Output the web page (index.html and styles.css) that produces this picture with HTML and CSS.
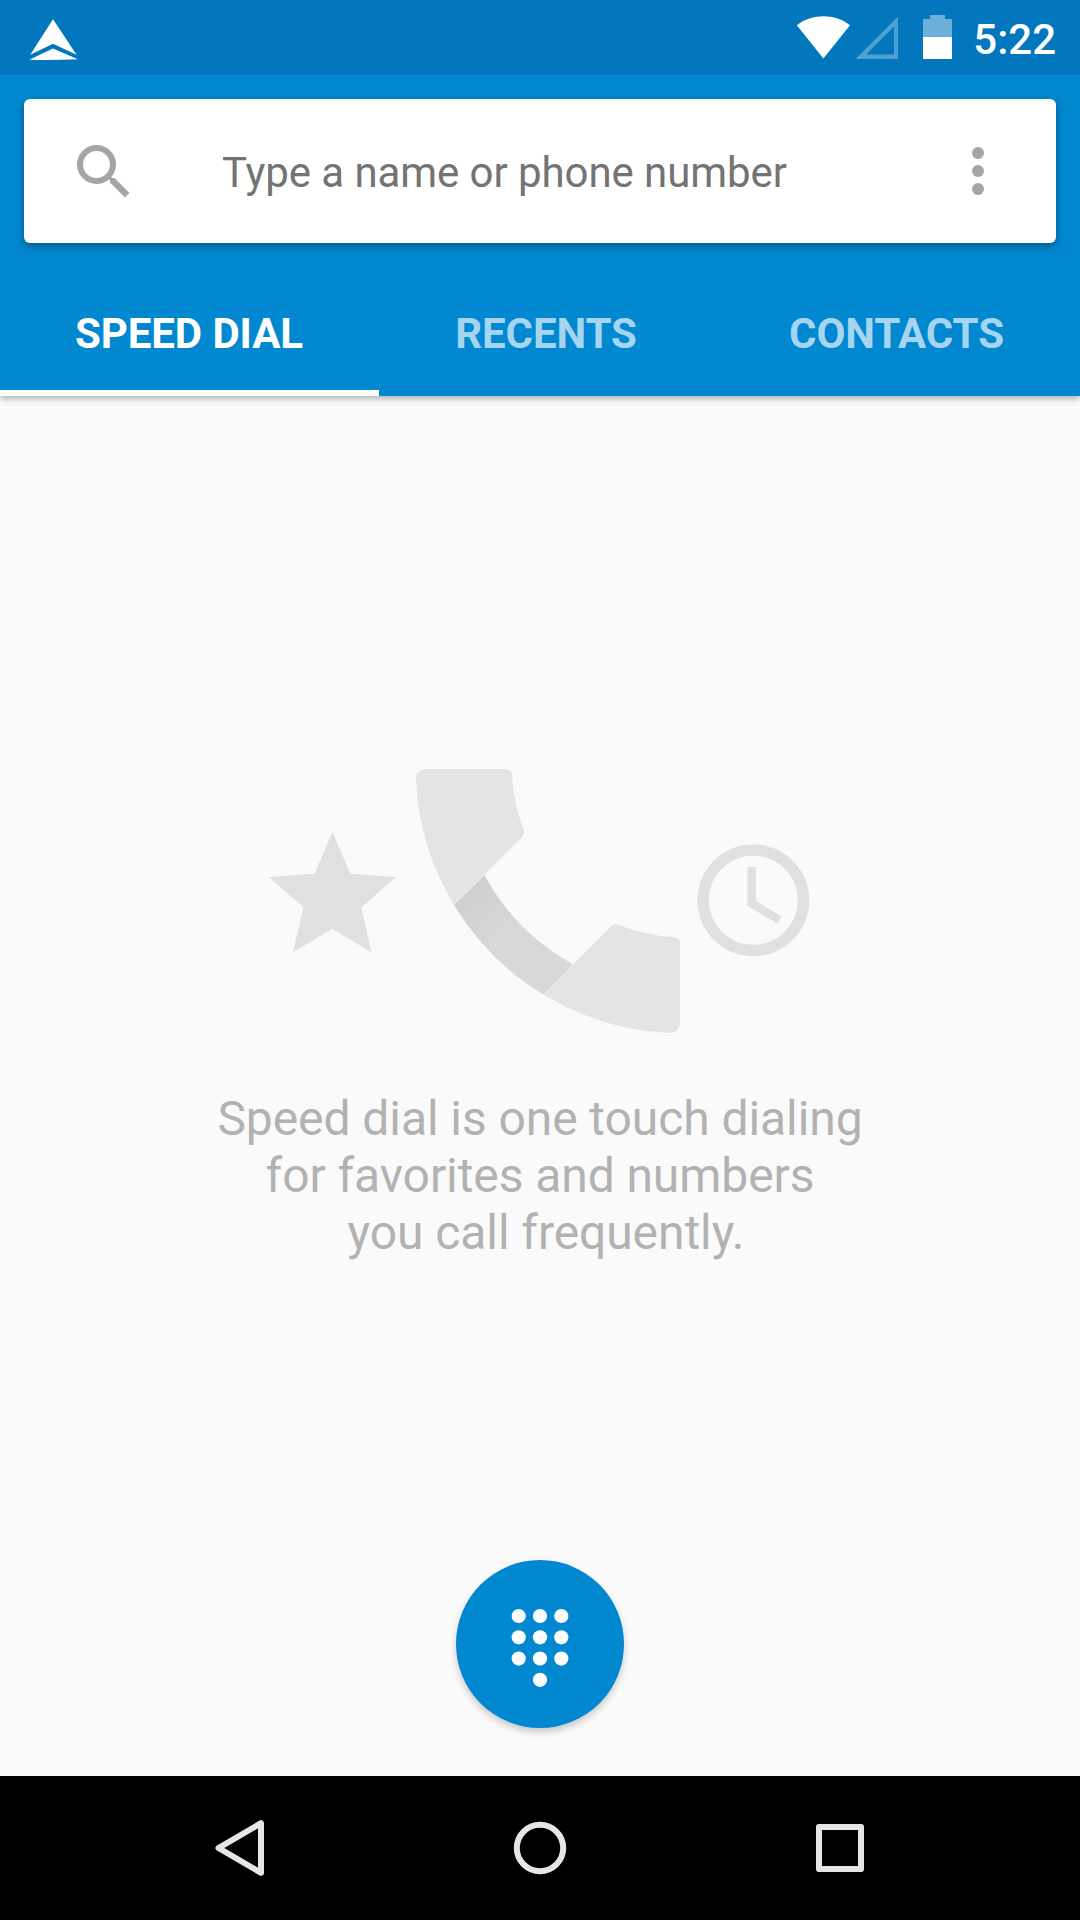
FILE: index.html
```html
<!DOCTYPE html>
<html lang="en">
<head>
<meta charset="utf-8">
<title>Phone</title>
<link rel="stylesheet" href="styles.css">
</head>
<body>
<div class="screen">
  <header class="header">
    <div class="status">
      <svg class="status-logo" width="54" height="75" viewBox="27.3 0 54 75" fill="#fff"><path d="M53.3 19.3 76.8 54.8 53.3 43.7 30.6 54.8zM53.3 48.4 78.2 59.2Q53.3 60.4 29.6 59.8z"/></svg>
      <svg width="54" height="75" viewBox="796 0 54 75" fill="#fff"><path d="M796.8 25.3C812 13.2 835 13.2 850 25.3L823.4 58.6z"/></svg>
      <svg class="signal" width="43" height="75" viewBox="855 0 43 75"><path fill="#fff" fill-opacity=".3" fill-rule="evenodd" d="M855.5 59 898 16.5V59zM866 54.6H894V26.6z"/></svg>
      <svg class="battery" width="29" height="75" viewBox="0 0 29 75"><path fill="#fff" fill-opacity=".42" d="M0 19H7V15H22V19H29V37H0z"/><path fill="#fff" d="M0 37H29V59H0z"/></svg>
      <span class="clock">5:22</span>
    </div>
    <div class="search">
      <svg class="search-icon" width="72" height="72" viewBox="0 0 24 24" fill="#a5a5a5"><path d="M15.5 14h-.79l-.28-.27A6.47 6.47 0 0 0 16 9.5 6.5 6.5 0 1 0 9.5 16c1.61 0 3.09-.59 4.23-1.57l.27.28v.79l5 4.99L20.49 19l-4.99-5zm-6 0a4.5 4.5 0 1 1 0-9 4.5 4.5 0 0 1 0 9z"/></svg>
      <span class="search-hint">Type a name or phone number</span>
      <svg width="72" height="72" viewBox="0 0 24 24" fill="#a5a5a5"><circle cx="12" cy="6" r="2"/><circle cx="12" cy="12" r="2"/><circle cx="12" cy="18" r="2"/></svg>
    </div>
    <nav class="tabs">
      <span class="tab tab-active">SPEED DIAL</span>
      <span class="tab">RECENTS</span>
      <span class="tab">CONTACTS</span>
    </nav>
  </header>
  <main class="content">
    <svg class="art" width="560" height="280" viewBox="260 760 560 280">
      <defs><linearGradient id="handle" gradientUnits="userSpaceOnUse" x1="469" y1="885" x2="510" y2="935"><stop offset="0" stop-color="#cfcfcf"/><stop offset="1" stop-color="#d8d8d8"/></linearGradient></defs>
      <path fill="#e0e0e0" d="M332.5 832 350.1 873.8 395.6 877 361.4 907.5 371.4 952.3 332.5 928.7 293 952.3 303.4 907.5 269 877 314.6 873.8z"/>
      <path fill="url(#handle)" d="M454 905A264 264 0 0 0 543.5 994.5L572.8 964.2A222.6 222.6 0 0 1 484.5 875z"/>
      <path fill="#e4e4e4" d="M454 905A264 264 0 0 1 416 780Q416 769 427 769H505Q512 769 512 776A168 168 0 0 0 523.6 829Q525 833.5 522.5 836.5z"/>
      <path fill="#e4e4e4" d="M543.5 994.5A264 264 0 0 0 669 1033Q680 1033 680 1021V944Q680 937 673 937A168 168 0 0 1 619 925Q614 923 611 926z"/>
      <circle cx="753.3" cy="900.3" r="50.2" fill="none" stroke="#e0e0e0" stroke-width="11.4"/>
      <path d="M751.7 867V903.3L779.6 920.2" fill="none" stroke="#e0e0e0" stroke-width="8.4"/>
    </svg>
    <p class="message">Speed dial is one touch dialing
for favorites and numbers
 you call frequently.</p>
    <div class="fab">
      <svg width="72" height="72" viewBox="0 0 72 72" fill="#fff"><circle cx="14.7" cy="8" r="7.1"/><circle cx="36" cy="8" r="7.1"/><circle cx="57.3" cy="8" r="7.1"/><circle cx="14.7" cy="29.3" r="7.1"/><circle cx="36" cy="29.3" r="7.1"/><circle cx="57.3" cy="29.3" r="7.1"/><circle cx="14.7" cy="50.6" r="7.1"/><circle cx="36" cy="50.6" r="7.1"/><circle cx="57.3" cy="50.6" r="7.1"/><circle cx="36" cy="71.8" r="7.1"/></svg>
    </div>
  </main>
  <footer class="navbar">
    <svg width="72" height="72" viewBox="0 0 72 72"><path d="M14.5 36 57 11.2V60.8z"/></svg>
    <svg width="72" height="72" viewBox="0 0 72 72"><circle cx="36" cy="36" r="23.2"/></svg>
    <svg width="72" height="72" viewBox="0 0 72 72"><path d="M15 15H57V57H15z"/></svg>
  </footer>
</div>
</body>
</html>
```

FILE: styles.css
```css
* { box-sizing: border-box; }
body { margin: 0; font-family: Roboto, sans-serif; }
svg { display: block; flex: none; overflow: visible; }
.screen {
  width: 1080px;
  height: 1920px;
  display: flex;
  flex-direction: column;
  overflow: hidden;
  background: #fafafa;
}
.header {
  height: 396px;
  flex: none;
  background: #0288d1;
  box-shadow: 0 3px 6px rgba(0, 0, 0, .28);
}
.status {
  height: 75px;
  display: flex;
  align-items: center;
  background: #0277bd;
  padding: 0 24px 0 27px;
}
.status-logo { margin-right: auto; }
.signal { margin-left: 5px; }
.battery { margin: 0 21px 0 25px; }
.clock {
  width: 83px;
  padding-top: 5px;
  color: #fff;
  font-size: 42px;
  font-weight: 500;
  line-height: 48px;
  text-align: right;
  white-space: nowrap;
}
.search {
  height: 144px;
  margin: 24px 24px 0;
  padding: 0 42px 0 44px;
  display: flex;
  align-items: center;
  border-radius: 6px;
  background: #fff;
  box-shadow: 0 3px 9px rgba(0, 0, 0, .36);
}
.search-icon { margin-top: 1px; }
.search-hint {
  flex: 1;
  padding: 3px 0 0 82px;
  color: #737373;
  font-size: 42px;
  line-height: 50px;
  letter-spacing: -.08px;
  white-space: nowrap;
}
.tabs {
  height: 153px;
  display: grid;
  grid-template-columns: 379px 335px 366px;
  padding-top: 9px;
}
.tab {
  padding: 58px 1px 0 0;
  color: #a6d5f0;
  font-size: 42px;
  font-weight: 700;
  line-height: 48px;
  letter-spacing: -.1px;
  text-align: center;
  white-space: nowrap;
}
.tab-active {
  color: #fff;
  border-bottom: 6px solid #fff;
}
.content {
  flex: 1;
  display: flex;
  flex-direction: column;
  align-items: center;
  padding-top: 364px;
}
.message {
  margin: 50px 0 0;
  color: #b2b2b2;
  font-size: 48px;
  line-height: 57px;
  letter-spacing: -.08px;
  text-align: center;
  white-space: pre;
}
.fab {
  width: 168px;
  height: 168px;
  margin-top: 299px;
  padding-top: 48px;
  display: flex;
  justify-content: center;
  border-radius: 50%;
  background: #0288d1;
  box-shadow: 0 4px 7px rgba(0, 0, 0, .2);
}
.navbar {
  height: 144px;
  flex: none;
  display: grid;
  grid-template-columns: repeat(3, 300px);
  justify-content: center;
  justify-items: center;
  align-items: center;
  background: #000;
  fill: none;
  stroke: #e6e6e6;
  stroke-width: 6;
  stroke-linejoin: round;
}
```
